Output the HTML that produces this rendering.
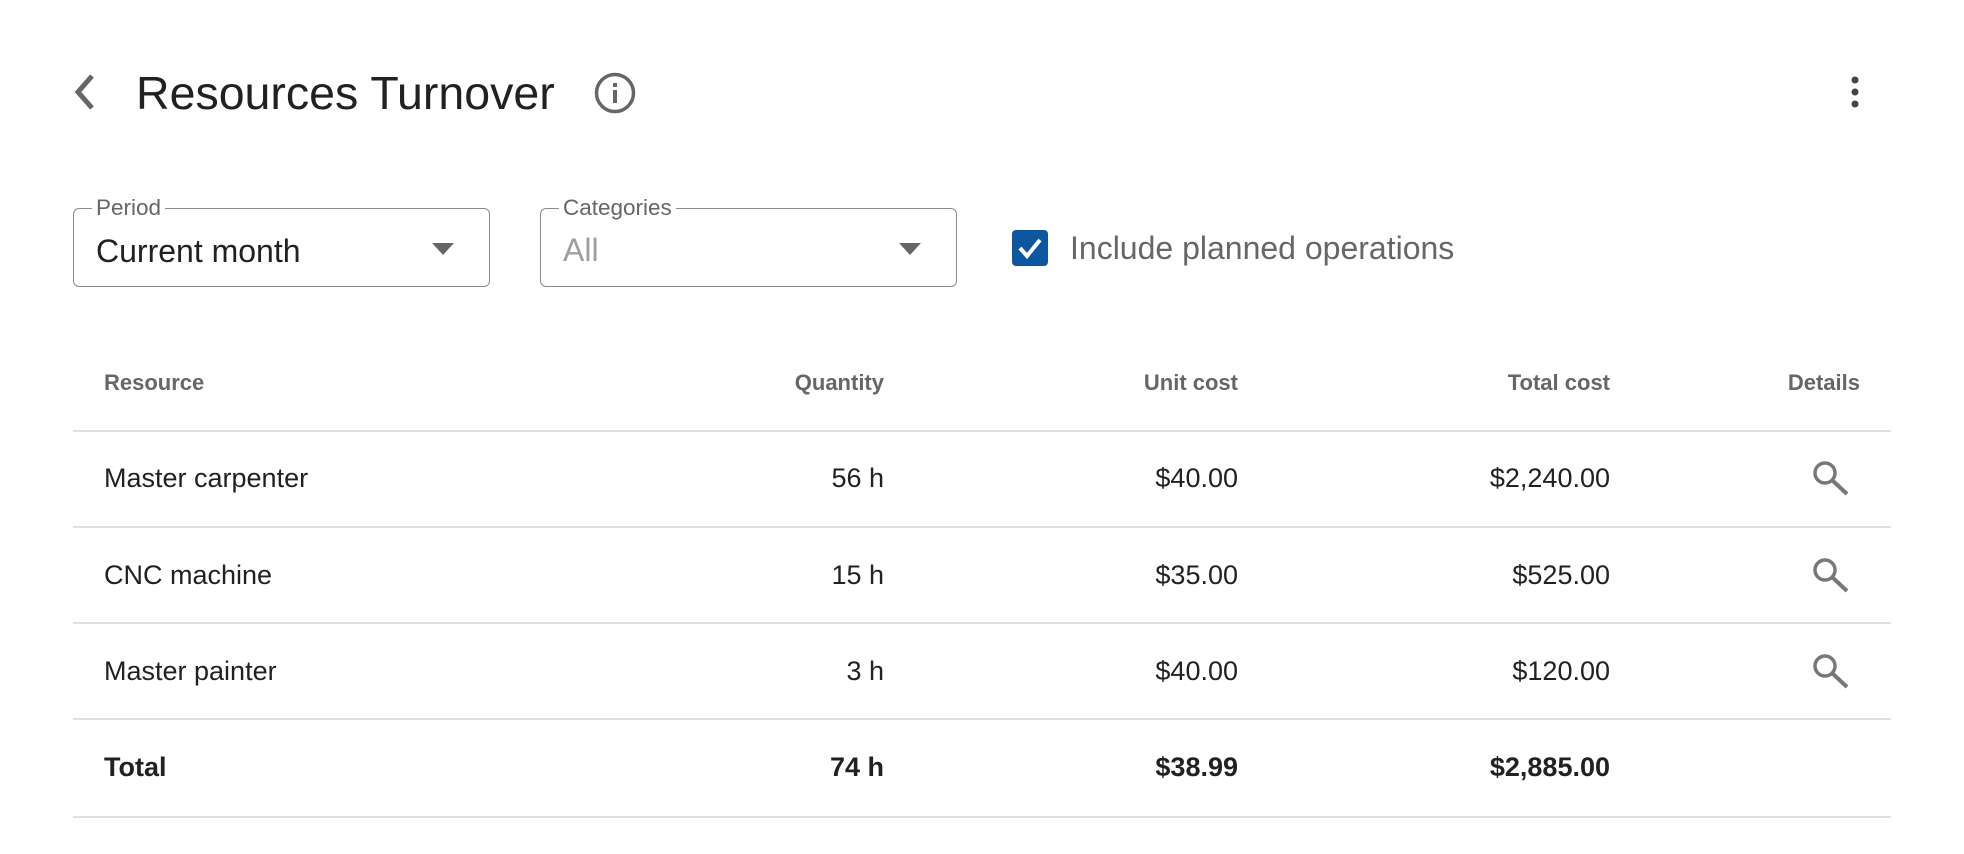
<!DOCTYPE html>
<html><head><meta charset="utf-8"><style>
body{margin:0;width:1964px;height:854px;background:#fff;font-family:"Liberation Sans",Arial,sans-serif;position:relative;overflow:hidden}
.a{position:absolute;white-space:nowrap}
.box{position:absolute;border:1.5px solid #8a8a8a;border-radius:6px}
.lbl{position:absolute;top:-11px;background:#fff;padding:0 4px;font-size:22.5px;color:#666;line-height:20px}
.line{position:absolute;left:73px;width:1818px;height:2px;background:#e0e0e0}
.h{font-size:22px;font-weight:bold;color:#666}
.c{font-size:27px;color:#212121}
.r{text-align:right}
</style></head><body>
<svg class="a" style="left:68px;top:72px" width="32" height="40" viewBox="0 0 32 40"><path d="M24 4 L10 20 L24 36" stroke="#666" stroke-width="5" fill="none"/></svg>
<div class="a" style="left:136px;top:66px;font-size:46.5px;color:#212121">Resources Turnover</div>
<svg class="a" style="left:593px;top:71px" width="44" height="44" viewBox="0 0 44 44"><circle cx="22" cy="22" r="18.5" stroke="#666" stroke-width="3.5" fill="none"/><rect x="20" y="19" width="4" height="13" fill="#666"/><rect x="20" y="12" width="4" height="4" fill="#666"/></svg>
<svg class="a" style="left:1847px;top:74px" width="16" height="36" viewBox="0 0 16 36"><circle cx="8" cy="6" r="3.5" fill="#444"/><circle cx="8" cy="18" r="3.5" fill="#444"/><circle cx="8" cy="30" r="3.5" fill="#444"/></svg>

<div class="box" style="left:73px;top:208px;width:415px;height:77px"><div class="lbl" style="left:18px">Period</div>
<div class="a" style="left:22px;top:24px;font-size:32px;color:#212121">Current month</div>
<svg class="a" style="left:358px;top:34px" width="22" height="12"><path d="M0 0H22L11 12Z" fill="#666"/></svg></div>
<div class="box" style="left:540px;top:208px;width:415px;height:77px"><div class="lbl" style="left:18px">Categories</div>
<div class="a" style="left:22px;top:23px;font-size:32px;color:#9e9e9e">All</div>
<svg class="a" style="left:358px;top:34px" width="22" height="12"><path d="M0 0H22L11 12Z" fill="#666"/></svg></div>

<div class="a" style="left:1012px;top:230px;width:36px;height:36px;background:#0d56a0;border-radius:4px"></div>
<svg class="a" style="left:1012px;top:230px" width="36" height="36"><path d="M8 18 L15 26 L28 10" stroke="#fff" stroke-width="4" fill="none"/></svg>
<div class="a" style="left:1070px;top:230px;font-size:32px;color:#666">Include planned operations</div>

<div class="a h" style="left:104px;top:370px">Resource</div>
<div class="a h r" style="right:1080px;top:370px">Quantity</div>
<div class="a h r" style="right:726px;top:370px">Unit cost</div>
<div class="a h r" style="right:354px;top:370px">Total cost</div>
<div class="a h r" style="right:104px;top:370px">Details</div>

<div class="line" style="top:430px"></div>
<div class="line" style="top:526px"></div>
<div class="line" style="top:622px"></div>
<div class="line" style="top:718px"></div>
<div class="line" style="top:816px"></div>

<div class="a c" style="left:104px;top:463px">Master carpenter</div>
<div class="a c r" style="right:1080px;top:463px">56 h</div>
<div class="a c r" style="right:726px;top:463px">$40.00</div>
<div class="a c r" style="right:354px;top:463px">$2,240.00</div>

<div class="a c" style="left:104px;top:560px">CNC machine</div>
<div class="a c r" style="right:1080px;top:560px">15 h</div>
<div class="a c r" style="right:726px;top:560px">$35.00</div>
<div class="a c r" style="right:354px;top:560px">$525.00</div>

<div class="a c" style="left:104px;top:656px">Master painter</div>
<div class="a c r" style="right:1080px;top:656px">3 h</div>
<div class="a c r" style="right:726px;top:656px">$40.00</div>
<div class="a c r" style="right:354px;top:656px">$120.00</div>

<div class="a c" style="left:104px;top:752px;font-weight:bold">Total</div>
<div class="a c r" style="right:1080px;top:752px;font-weight:bold">74 h</div>
<div class="a c r" style="right:726px;top:752px;font-weight:bold">$38.99</div>
<div class="a c r" style="right:354px;top:752px;font-weight:bold">$2,885.00</div>

<svg class="a" style="left:1810px;top:458px" width="44" height="44" viewBox="0 0 44 44"><circle cx="15" cy="15" r="10" stroke="#777" stroke-width="3.5" fill="none"/><path d="M22 22L37 36" stroke="#777" stroke-width="4"/></svg>
<svg class="a" style="left:1810px;top:555px" width="44" height="44" viewBox="0 0 44 44"><circle cx="15" cy="15" r="10" stroke="#777" stroke-width="3.5" fill="none"/><path d="M22 22L37 36" stroke="#777" stroke-width="4"/></svg>
<svg class="a" style="left:1810px;top:651px" width="44" height="44" viewBox="0 0 44 44"><circle cx="15" cy="15" r="10" stroke="#777" stroke-width="3.5" fill="none"/><path d="M22 22L37 36" stroke="#777" stroke-width="4"/></svg>
</body></html>
